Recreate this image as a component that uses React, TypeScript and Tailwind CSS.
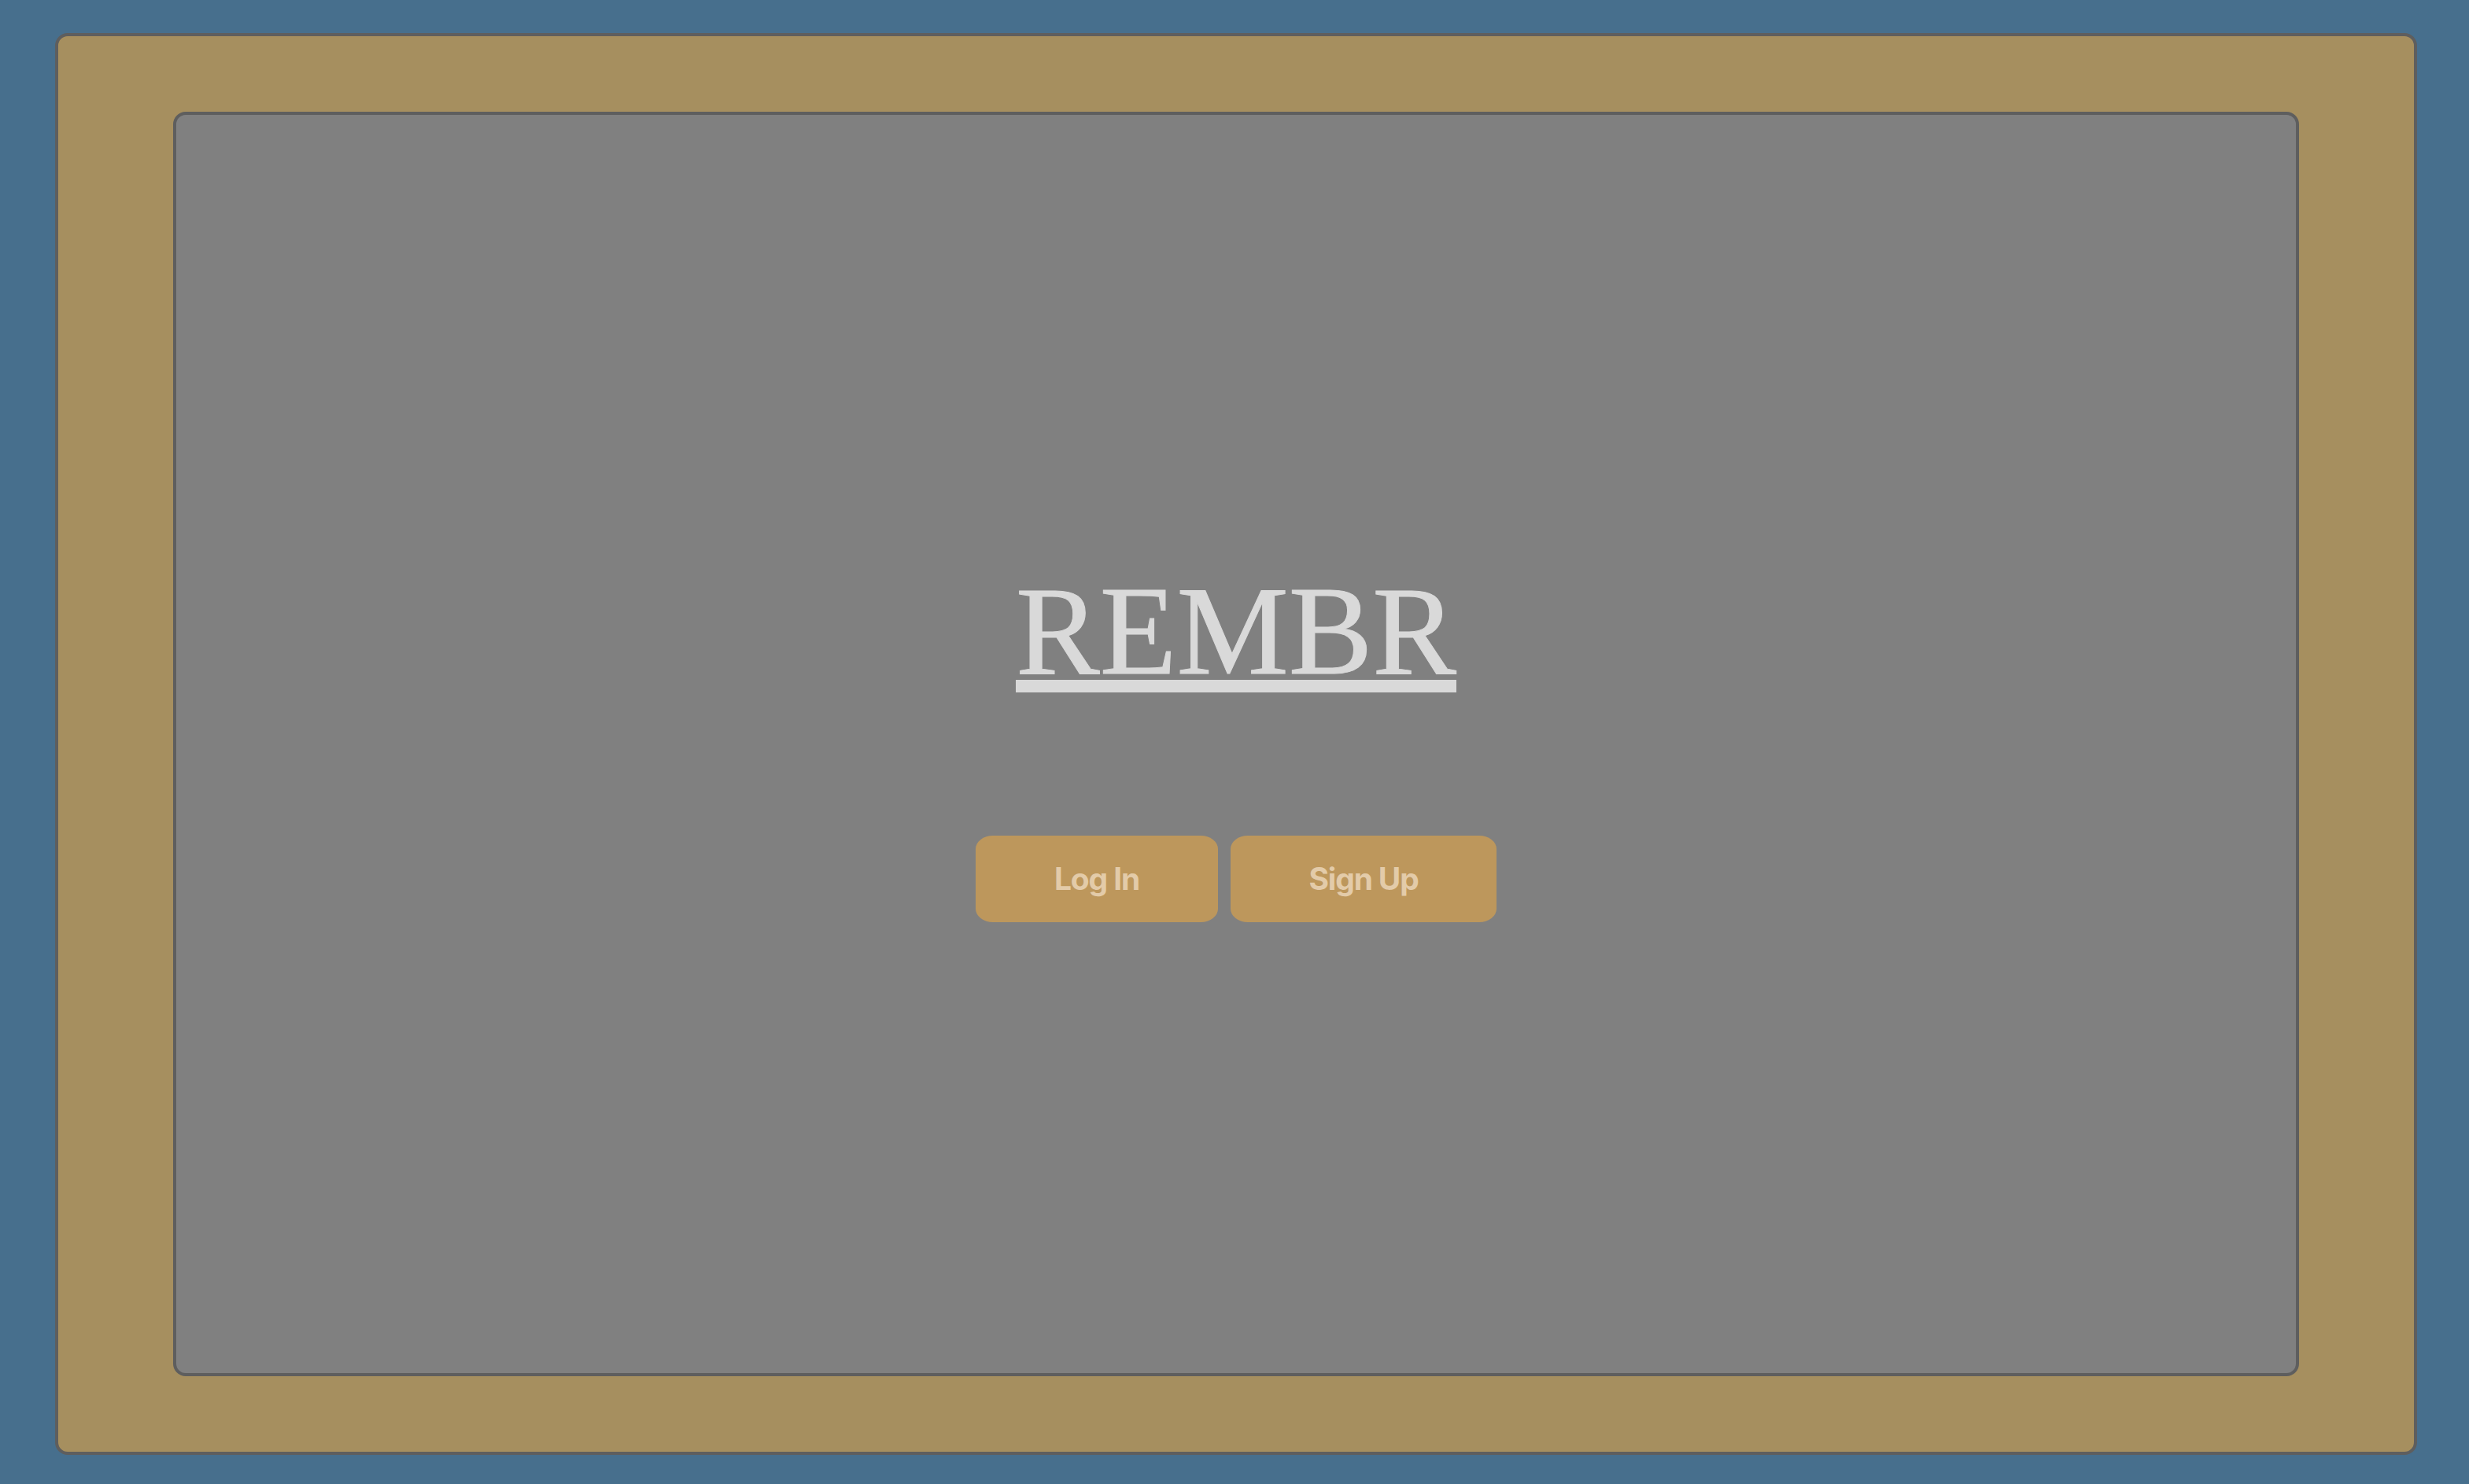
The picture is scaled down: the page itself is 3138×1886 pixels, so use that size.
import React from 'react';

export default function App() {
  return (
    <div className="h-screen w-full bg-[#476f8d] pt-[42px] pl-[70px] pr-[66px] pb-[37px] flex">
      <div className="flex-1 flex rounded-[16px] border-4 border-[#5e5e5e] bg-[#a68f5f] px-[146px] py-[96px]">
        <div className="flex-1 flex flex-col items-center rounded-[16px] border-4 border-[#5e5e5e] bg-[#808080]">
          <div className="mt-[576px] flex flex-col">
            <span className="block text-[160px] leading-none text-[#d9d9d9] [-webkit-text-stroke:1px_#d9d9d9] font-['Liberation_Serif',serif] whitespace-nowrap">
              REMBR
            </span>
            <div className="mt-[-18px] h-[16px] w-full bg-[#d9d9d9]" />
          </div>

          <div className="mt-[182px] flex gap-[16px]">
            <button className="w-[308px] h-[110px] rounded-[22px_/_17px] bg-[#bd975c] flex items-center justify-center">
              <span className="text-[39px] font-bold tracking-[-0.03em] text-[#e3cba9] font-['Inter',sans-serif]">
                Log In
              </span>
            </button>
            <button className="w-[338px] h-[110px] rounded-[22px_/_17px] bg-[#bd975c] flex items-center justify-center">
              <span className="text-[39px] font-bold tracking-[-0.03em] text-[#e3cba9] font-['Inter',sans-serif]">
                Sign Up
              </span>
            </button>
          </div>
        </div>
      </div>
    </div>
  );
}
